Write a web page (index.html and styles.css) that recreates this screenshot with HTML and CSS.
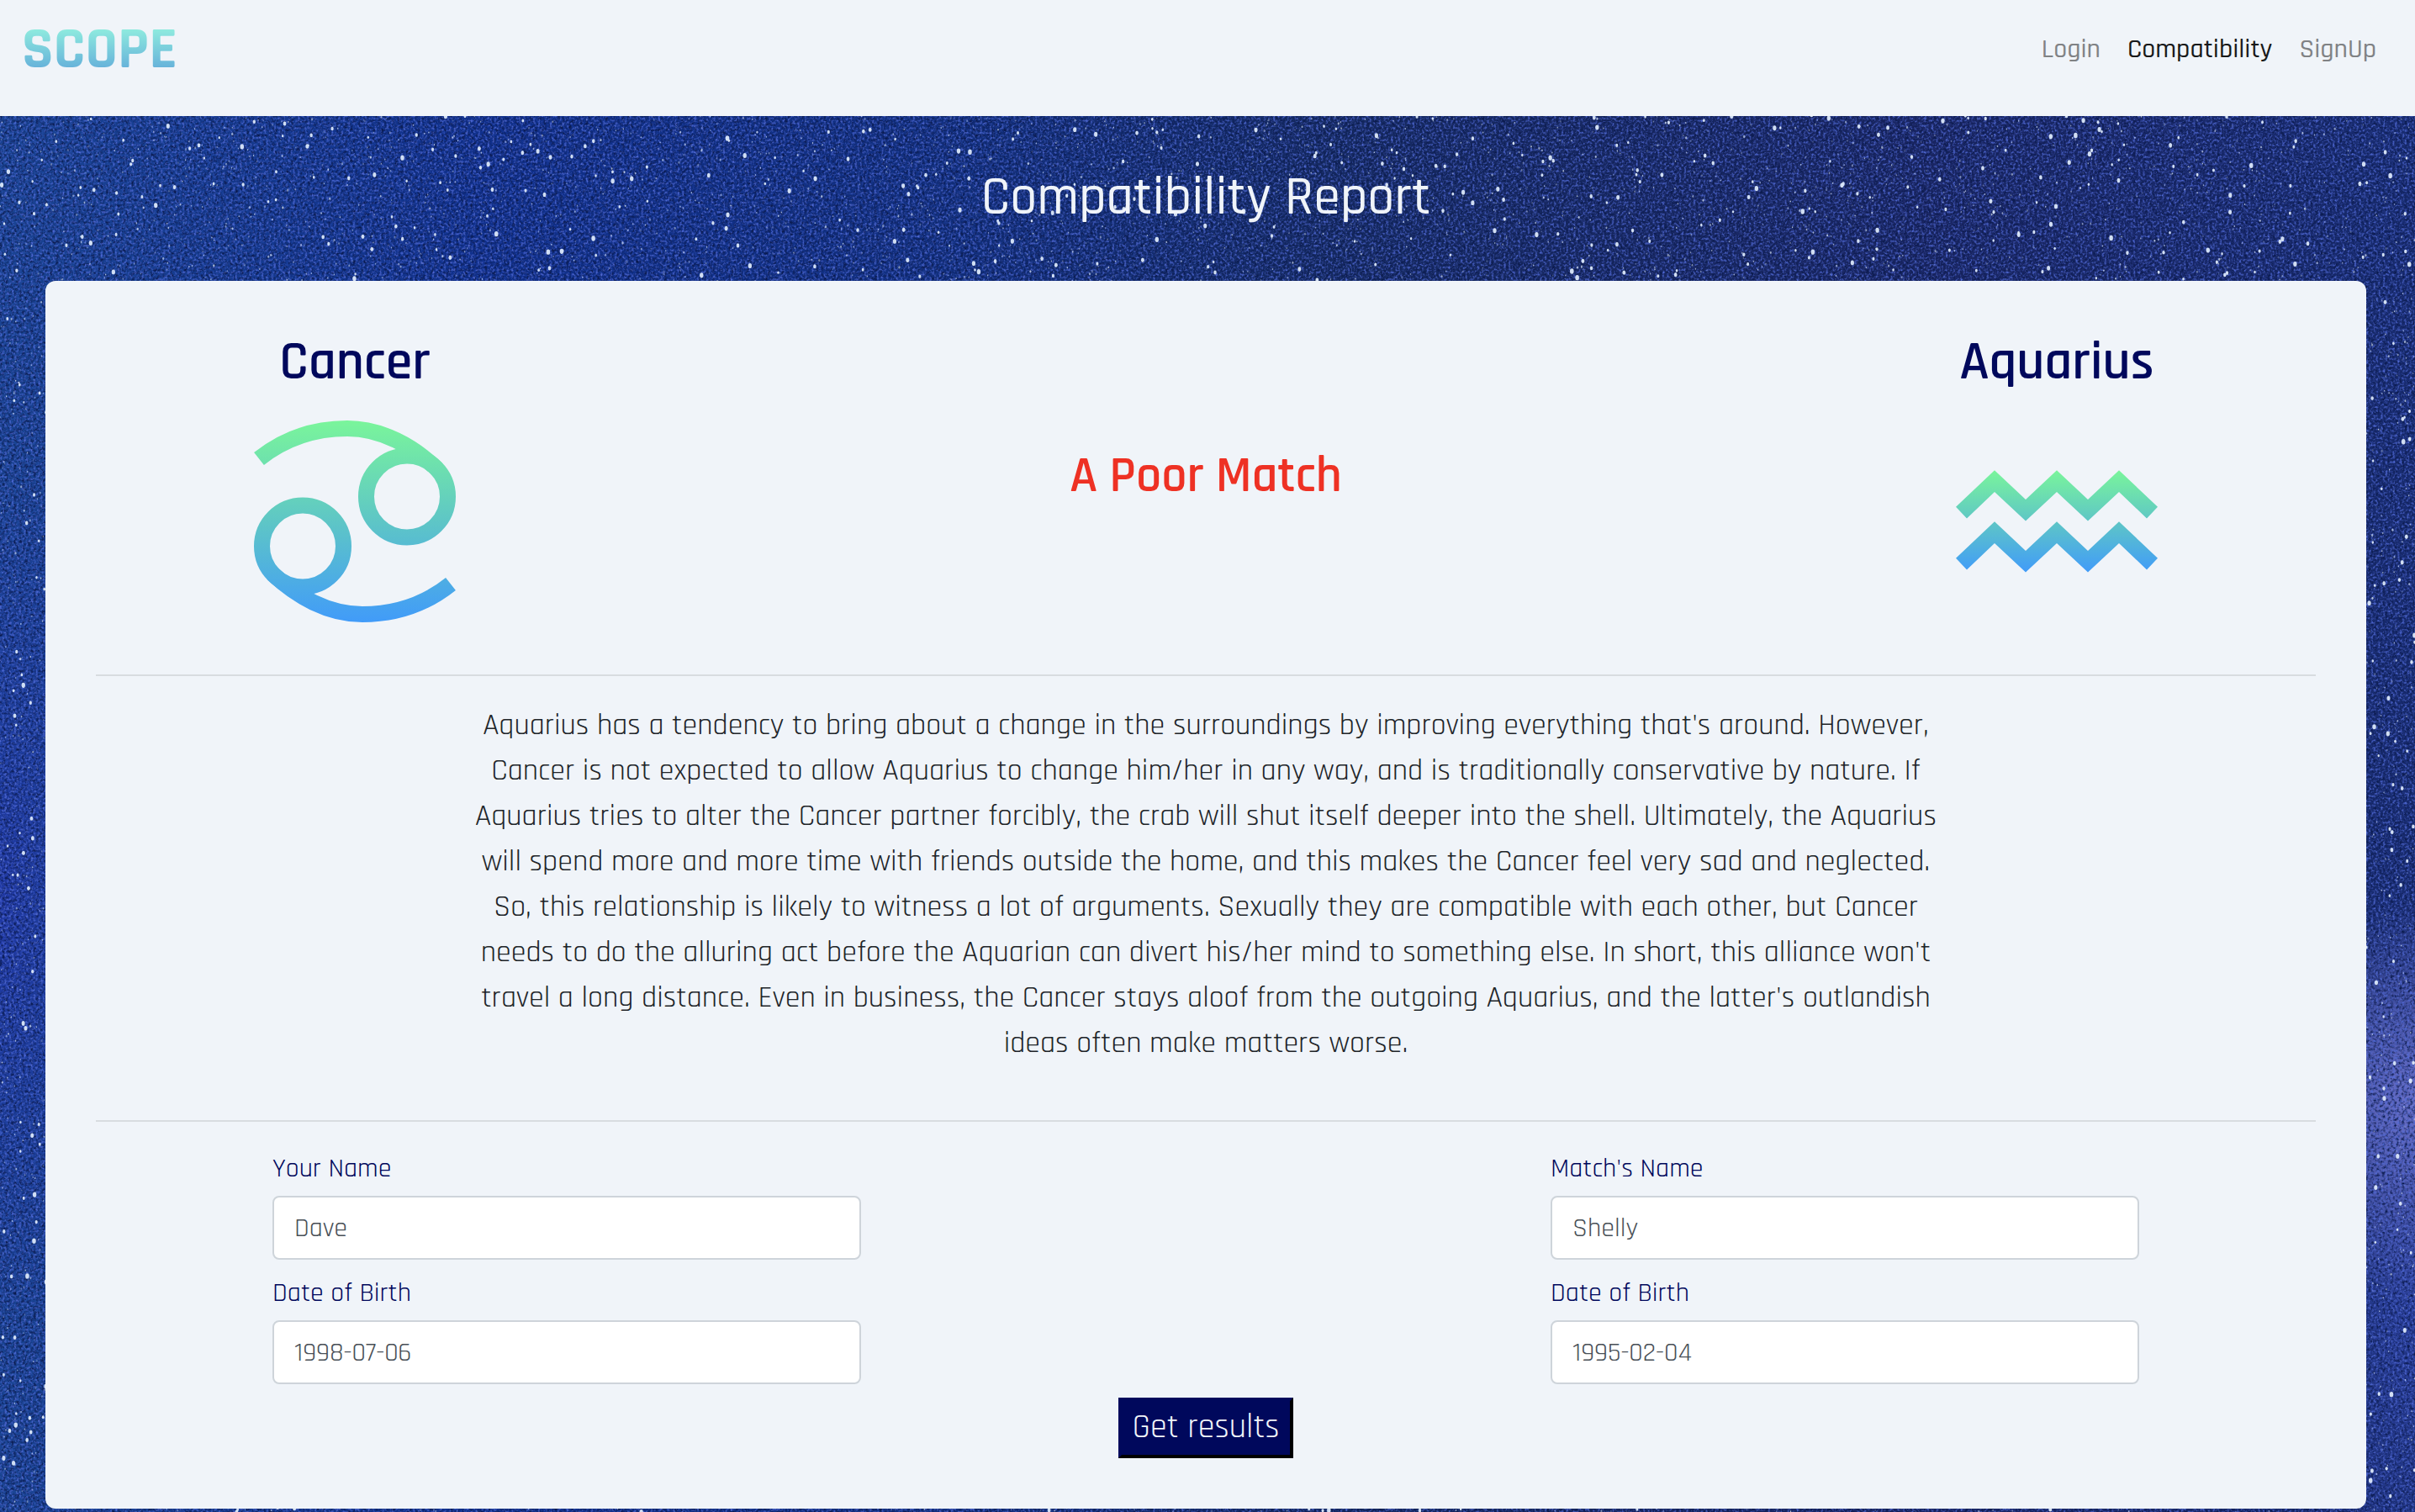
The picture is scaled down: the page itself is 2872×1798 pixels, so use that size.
FILE: index.html
```html
<!DOCTYPE html>
<html lang="en">
<head>
<meta charset="utf-8">
<meta name="viewport" content="width=device-width, initial-scale=1">
<title>Scope - Compatibility Report</title>
<link rel="stylesheet" href="styles.css">
</head>
<body>
<svg class="sky" aria-hidden="true">
  <defs>
    <filter id="grain" x="0" y="0" width="100%" height="100%" color-interpolation-filters="sRGB">
      <feTurbulence type="fractalNoise" baseFrequency="0.35" numOctaves="2" seed="4"/>
      <feColorMatrix values="0 0 0 0 0.32  0 0 0 0 0.42  0 0 0 0 0.85  2.4 0 0 0 -1.1"/>
    </filter>
    <filter id="shade" x="0" y="0" width="100%" height="100%" color-interpolation-filters="sRGB">
      <feTurbulence type="fractalNoise" baseFrequency="0.3" numOctaves="2" seed="12"/>
      <feColorMatrix values="0 0 0 0 0.04  0 0 0 0 0.1  0 0 0 0 0.3  2.4 0 0 0 -1"/>
    </filter>
  </defs>
  <rect width="100%" height="100%" filter="url(#shade)"/>
  <rect width="100%" height="100%" filter="url(#grain)"/>
  <g id="stars"></g>
</svg>
<header class="navbar">
  <a class="brand" href="#">SCOPE</a>
  <nav class="links">
    <a href="#">Login</a>
    <a class="active" href="#" aria-current="page">Compatibility</a>
    <a href="#">SignUp</a>
  </nav>
</header>
<main class="page">
  <h1 class="title">Compatibility Report</h1>
  <section class="card">
    <div class="signs">
      <div class="sign">
        <h2>Cancer</h2>
        <svg class="glyph" viewBox="0 0 240 240" fill="none" stroke="url(#cancerFill)" stroke-width="19" role="img" aria-label="Cancer">
          <defs><linearGradient id="cancerFill" gradientUnits="userSpaceOnUse" x1="0" y1="0" x2="0" y2="240"><stop offset="0" stop-color="#7af59b"/><stop offset="0.5" stop-color="#5ec6c6"/><stop offset="1" stop-color="#419bf9"/></linearGradient></defs>
          <circle cx="182" cy="90.5" r="48.5"/>
          <path d="M6 45.500C38 20 74 9.500 111 9.500C152 9.500 190 31 218 58"/>
          <circle cx="58" cy="149.500" r="48.500"/>
          <path d="M234 194.500C202 220 166 230.500 129 230.500C88 230.500 50 209 22 182"/>
        </svg>
      </div>
      <p class="verdict">A Poor Match</p>
      <div class="sign">
        <h2>Aquarius</h2>
        <svg class="glyph" viewBox="0 0 240 240" fill="url(#aquariusFill)" role="img" aria-label="Aquarius">
          <defs><linearGradient id="aquariusFill" gradientUnits="userSpaceOnUse" x1="0" y1="59" x2="0" y2="181"><stop offset="0" stop-color="#7af59b"/><stop offset="0.5" stop-color="#5ec6c6"/><stop offset="1" stop-color="#419bf9"/></linearGradient></defs>
          <path d="M0 102.700L46 59.300L83 94L120 59.300L157 94L194 59.300L240 102.700L227 116.500L194 85L157 119.500L120 85L83 119.500L46 85L13 116.500Z"/>
          <path d="M0 163.700L46 120.300L83 155L120 120.300L157 155L194 120.300L240 163.700L227 177.500L194 146L157 180.500L120 146L83 180.500L46 146L13 177.500Z"/>
        </svg>
      </div>
    </div>
    <hr>
    <p class="report">Aquarius has a tendency to bring about a change in the surroundings by improving everything that's around. However, Cancer is not expected to allow Aquarius to change him/her in any way, and is traditionally conservative by nature. If Aquarius tries to alter the Cancer partner forcibly, the crab will shut itself deeper into the shell. Ultimately, the Aquarius will spend more and more time with friends outside the home, and this makes the Cancer feel very sad and neglected. So, this relationship is likely to witness a lot of arguments. Sexually they are compatible with each other, but Cancer needs to do the alluring act before the Aquarian can divert his/her mind to something else. In short, this alliance won't travel a long distance. Even in business, the Cancer stays aloof from the outgoing Aquarius, and the latter's outlandish ideas often make matters worse.</p>
    <hr>
    <form class="form">
      <div class="people">
        <div class="person">
          <label for="name1">Your Name</label>
          <input id="name1" type="text" value="Dave">
          <label for="dob1">Date of Birth</label>
          <input id="dob1" type="text" value="1998-07-06">
        </div>
        <div class="person">
          <label for="name2">Match's Name</label>
          <input id="name2" type="text" value="Shelly">
          <label for="dob2">Date of Birth</label>
          <input id="dob2" type="text" value="1995-02-04">
        </div>
      </div>
      <button type="button">Get results</button>
    </form>
  </section>
</main>
<script src="stars.js"></script>
</body>
</html>
```
FILE: styles.css
```css
* { box-sizing: border-box; }

body {
  position: relative;
  margin: 0;
  min-height: 100vh;
  font-family: Rajdhani, Roboto, "Liberation Sans", sans-serif;
  font-weight: 400;
  font-size: 32px;
  line-height: 48px;
  color: #212529;
  background: #142a70;
}

.sky {
  position: absolute;
  inset: 0;
  z-index: -1;
  width: 100%;
  height: 100%;
  background:
    radial-gradient(ellipse 200px 240px at 100% 73%, #6a70c8, transparent),
    radial-gradient(ellipse 160px 500px at 0 60%, #2038a4, transparent),
    radial-gradient(ellipse 160px 500px at 100% 85%, #2a3f9c, transparent),
    linear-gradient(90deg, #1a4494 0%, #10308c 20%, #123080 40%, #152a62 55%, #1a2664 80%, #182c72 100%);
}

.navbar {
  display: flex;
  justify-content: space-between;
  align-items: flex-start;
  height: 138px;
  padding: 20px 46px 0 26px;
  background: #f0f4f9;
}

.brand {
  font-size: 70px;
  line-height: 80px;
  font-weight: 700;
  text-decoration: none;
  color: transparent;
  background: linear-gradient(#9bfce0, #569bd8);
  background-clip: text;
  -webkit-background-clip: text;
}

.links {
  display: flex;
  gap: 32px;
  padding-top: 15px;
  font-weight: 500;
}

.links a {
  color: #808285;
  text-decoration: none;
}

.links .active { color: #18191a; }

.page { padding: 60px 58px 4px 54px; }

.title {
  margin: 0 0 62px;
  font-size: 64px;
  line-height: 74px;
  font-weight: 500;
  text-align: center;
  color: #f0f4f9;
}

.card {
  padding: 60px;
  border-radius: 12px;
  background: #f0f4f9;
}

.signs {
  display: grid;
  grid-template-columns: 7fr 16fr 7fr;
  justify-items: center;
  align-items: center;
}

.sign {
  display: flex;
  flex-direction: column;
  align-items: center;
  gap: 32px;
}

.sign h2 {
  margin: 0;
  font-size: 64px;
  line-height: 74px;
  font-weight: 600;
  color: #00085c;
}

.glyph {
  display: block;
  width: 240px;
  height: 240px;
}

.verdict {
  margin: 0;
  font-size: 60px;
  line-height: 70px;
  font-weight: 600;
  color: #ee3124;
}

hr {
  height: 2px;
  margin: 62px 0 32px;
  border: 0;
  background: #d8dce0;
}

.report {
  width: 67%;
  margin: 0 auto 64px;
  font-size: 36px;
  line-height: 54px;
  text-align: center;
}

.form {
  display: flex;
  flex-direction: column;
  align-items: center;
  gap: 16px;
}

.people {
  display: flex;
  justify-content: space-between;
  width: 100%;
  padding: 0 210px;
}

.person {
  display: flex;
  flex-direction: column;
  flex: 0 1 700px;
}

label {
  margin-bottom: 8px;
  color: #00085c;
}

input {
  width: 100%;
  height: 76px;
  padding: 0 24px;
  border: 2px solid #ced4da;
  border-radius: 8px;
  font: inherit;
  color: #495057;
  background: #fff;
}

input + label { margin-top: 16px; }

button {
  height: 72px;
  padding: 0 12px;
  border: 4px solid;
  border-color: #00085c #000 #000 #00085c;
  font: inherit;
  font-size: 40px;
  color: #f0f4f9;
  background: #00085c;
}
```
FILE: stars.js
```js
// Scatter stars with a seeded generator so the sky is the same on every load.
let seed = 71;
function rand() {
  seed = (seed * 16807) % 2147483647;
  return seed / 2147483647;
}
const sky = document.querySelector('.sky').getBoundingClientRect();
const group = document.getElementById('stars');
const count = Math.round(sky.width * sky.height / 220);
for (let i = 0; i < count; i++) {
  const x = rand() * sky.width;
  const y = rand() * sky.height;
  const size = Math.pow(rand(), 7) * 1.6 + 0.7;
  const star = document.createElementNS('http://www.w3.org/2000/svg', 'ellipse');
  star.setAttribute('cx', x);
  star.setAttribute('cy', y);
  star.setAttribute('rx', size);
  star.setAttribute('ry', size * 1.4);
  star.setAttribute('fill', '#dbe8fa');
  star.setAttribute('opacity', size > 1.2 ? 0.95 : 0.1 + rand() * 0.7);
  group.appendChild(star);
}
```
